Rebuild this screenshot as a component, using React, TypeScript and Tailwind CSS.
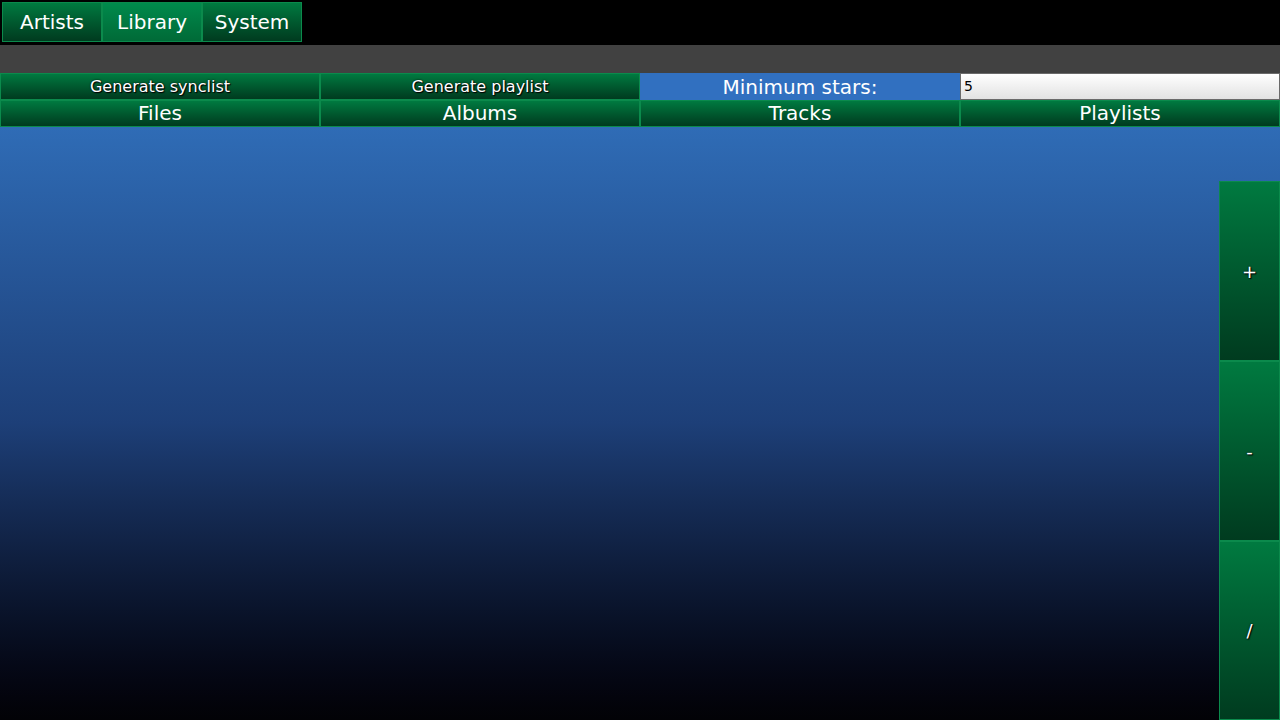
const font = { fontFamily: '"DejaVu Sans", Verdana, sans-serif' };

const btn =
  'bg-gradient-to-b from-[#007a40] to-[#003b1f] border border-[#0b8a4c] text-white flex items-center justify-center';

function Tab({ label, active }: { label: string; active?: boolean }) {
  return (
    <div
      className={`w-[100px] h-10 flex items-center justify-center text-[20px] text-white border border-[#0b8a4c] ${
        active ? 'bg-gradient-to-b from-[#008a4c] to-[#006a37]' : 'bg-gradient-to-b from-[#007a40] to-[#003b1f]'
      }`}
    >
      {label}
    </div>
  );
}

export default function App() {
  return (
    <div className="w-[1280px] h-[720px] flex flex-col bg-black overflow-hidden" style={font}>
      <div className="h-[45px] bg-black flex pt-[2px] pl-[2px]">
        <Tab label="Artists" />
        <Tab label="Library" active />
        <Tab label="System" />
      </div>
      <div className="h-[28px] bg-[#414141]" />
      <div className="h-[27px] grid grid-cols-4">
        <div className={`${btn} text-[16px] leading-[18px] [text-shadow:0_0_2px_#000,1px_1px_1px_#000]`}>Generate synclist</div>
        <div className={`${btn} text-[16px] leading-[18px] [text-shadow:0_0_2px_#000,1px_1px_1px_#000]`}>Generate playlist</div>
        <div className="bg-[#3170c0] text-white text-[20px] leading-[22px] flex items-center justify-center pt-[1px]">Minimum stars:</div>
        <div className="border border-[#6a6a6a] bg-gradient-to-b from-white to-[#e2e2e2] flex items-start pt-[2px] px-[3px] text-[14px] text-black">
          5
        </div>
      </div>
      <div className="h-[27px] grid grid-cols-4">
        <div className={`${btn} text-[20px] leading-[22px] pb-[1px]`}>Files</div>
        <div className={`${btn} text-[20px] leading-[22px] pb-[1px]`}>Albums</div>
        <div className={`${btn} text-[20px] leading-[22px] pb-[1px]`}>Tracks</div>
        <div className={`${btn} text-[20px] leading-[22px] pb-[1px]`}>Playlists</div>
      </div>
      <div className="flex-1 bg-gradient-to-b from-[#2f6cb6] via-[#1d3f78] to-[#020206] flex justify-end items-end">
        <div className="w-[61px] flex flex-col">
          {['+', '-', '/'].map((s) => (
            <div
              key={s}
              className="h-[180px] last:h-[179px] bg-gradient-to-b from-[#007a40] to-[#003b1f] border border-[#0b8a4c] text-white text-[18px] flex items-center justify-center [text-shadow:0_0_2px_#000,1px_1px_1px_#000]"
            >
              {s}
            </div>
          ))}
        </div>
      </div>
    </div>
  );
}
